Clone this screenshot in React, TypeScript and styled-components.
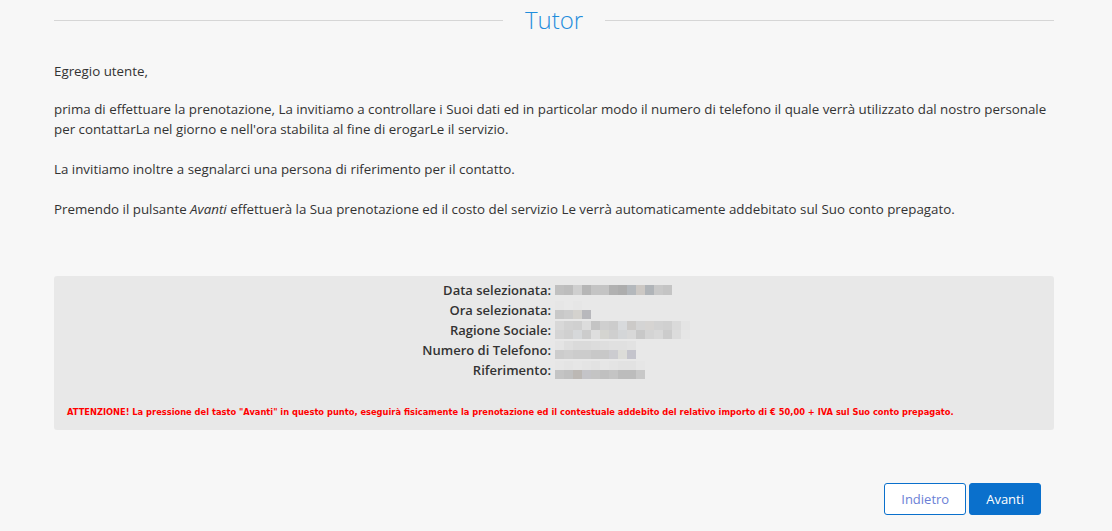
import React from "react";
import styled, { createGlobalStyle } from "styled-components";

const Global = createGlobalStyle`
  html, body {
    margin: 0;
    padding: 0;
    background: #f7f7f7;
  }
  body {
    font-family: "Open Sans", "Liberation Sans", sans-serif;
    color: #333;
  }
`;

// pixelated (blurred-out) values, one string of grey levels per row
type Cells = string[][];

const details: { label: string; cells: Cells }[] = [
  {
    label: "Data selezionata:",
    cells: [
      ["#c0c0c0", "#bdbdbd", "#cfcfcf", "#b6b6b6", "#c4c4c4", "#c4c4c4", "#b1b1b1", "#adadad", "#b4b8bc", "#ccc8c4", "#b0b4b8", "#c8c8c8", "#c4c4c4"],
    ],
  },
  {
    label: "Ora selezionata:",
    cells: [
      ["#e6e6e6", "#e8e8e8", "#e6e6e6", "#e8e8e8"],
      ["#c8c8c8", "#cccccc", "#d4d2ce", "#b8b8bc"],
    ],
  },
  {
    label: "Ragione Sociale:",
    cells: [
      ["#d8d8d8", "#d2d2d2", "#d0d0d0", "#dcdcdc", "#c4c4c4", "#cfcfcf", "#cccccc", "#d8dadc", "#cccac8", "#d4d4d4", "#d6d4d2", "#d2d2d2", "#d0d0d0", "#dadada", "#e4e4e4"],
      ["#d4d4d4", "#d0d0d0", "#d6d8da", "#cccccc", "#dedede", "#d4d4d0", "#cfcfcf", "#d4d6d8", "#d8d8d8", "#c8c8c8", "#d4d4d4", "#d8d8d8", "#cccccc", "#dcdcdc", "#e6e6e6"],
    ],
  },
  {
    label: "Numero di Telefono:",
    cells: [
      ["#e4e4e4", "#dedede", "#dadada", "#dadada", "#dcdcdc", "#dedede", "#e0e0e0", "#e0e0e0", "#e2e2e2"],
      ["#cccccc", "#cfcfcf", "#cccccc", "#cccccc", "#c8c8c8", "#c8c8c8", "#ccccd0", "#dcdcd8", "#c4c4cc"],
    ],
  },
  {
    label: "Riferimento:",
    cells: [
      ["#e6e6e6", "#e4e4e4", "#e6e6e6", "#e4e4e4", "#e2e2e2", "#e6e6e6", "#e4e4e4", "#e2e2e2", "#e2e2e2", "#e6e6e6"],
      ["#c4c4c4", "#c0c0c0", "#bcb8b4", "#c4c4c8", "#c4c4c4", "#c0c0c0", "#c4c4c4", "#bcbcbc", "#bcbcbc", "#c8c8c8"],
    ],
  },
];

const Blurred: React.FC<{ cells: Cells }> = ({ cells }) => (
  <S.Blur>
    {cells.map((row, i) => (
      <S.BlurRow key={i}>
        {row.map((c, j) => (
          <S.Cell key={j} $shade={c} $tall={cells.length === 1} />
        ))}
      </S.BlurRow>
    ))}
  </S.Blur>
);

export default function App() {
  return (
    <>
      <Global />
      <S.Page>
        <S.Heading>
          <S.Rule />
          <S.Title>Tutor</S.Title>
          <S.Rule />
        </S.Heading>

        <S.Text>
          <S.P $gap={18}>Egregio utente,</S.P>
          <S.P $gap={20}>
            prima di effettuare la prenotazione, La invitiamo a controllare i Suoi dati ed in
            particolar modo il numero di telefono il quale verrà utilizzato dal nostro personale
            per contattarLa nel giorno e nell'ora stabilita al fine di erogarLe il servizio.
          </S.P>
          <S.P $gap={20}>
            La invitiamo inoltre a segnalarci una persona di riferimento per il contatto.
          </S.P>
          <S.P $gap={20}>
            Premendo il pulsante <em>Avanti</em> effettuerà la Sua prenotazione ed il costo del
            servizio Le verrà automaticamente addebitato sul Suo conto prepagato.
          </S.P>
        </S.Text>

        <S.Summary>
          <S.Details>
            {details.map((d) => (
              <React.Fragment key={d.label}>
                <S.Label>{d.label}</S.Label>
                <S.Value>
                  <Blurred cells={d.cells} />
                </S.Value>
              </React.Fragment>
            ))}
          </S.Details>
          <S.Warning>
            ATTENZIONE! La pressione del tasto "Avanti" in questo punto, eseguirà fisicamente la
            prenotazione ed il contestuale addebito del relativo importo di € 50,00 + IVA sul Suo
            conto prepagato.
          </S.Warning>
        </S.Summary>

        <S.Actions>
          <S.Button $primary={false}>Indietro</S.Button>
          <S.Button $primary>Avanti</S.Button>
        </S.Actions>
      </S.Page>
    </>
  );
}

export class S {
  static Page = styled.div`
    width: 1000px;
    margin-left: 54px;
    padding-top: 6px;
  `;

  static Heading = styled.div`
    display: flex;
    align-items: center;
    gap: 22px;
    height: 28px;
  `;

  static Rule = styled.div`
    flex: 1;
    height: 1px;
    background: #d6d6d6;
  `;

  static Title = styled.h2`
    margin: 0;
    font-size: 24px;
    font-weight: 300;
    line-height: 28px;
    color: #1f8ddc;
  `;

  static Text = styled.div`
    margin-top: 27px;
    font-size: 13.33px;
    line-height: 20px;
    color: #333;
  `;

  static P = styled.p<{ $gap: number }>`
    margin: 0 0 ${(p) => p.$gap}px;
  `;

  static Summary = styled.div`
    margin-top: 57px;
    background: #e8e8e8;
    border-radius: 3px;
    padding: 4px 0 13px;
  `;

  static Details = styled.div`
    display: grid;
    grid-template-columns: 497px 1fr;
    column-gap: 4px;
    font-size: 13px;
    font-weight: 600;
    line-height: 20px;
    color: #333;
  `;

  static Label = styled.div`
    text-align: right;
  `;

  static Value = styled.div`
    display: flex;
    align-items: center;
  `;

  static Blur = styled.div`
    display: flex;
    flex-direction: column;
  `;

  static BlurRow = styled.div`
    display: flex;
  `;

  static Cell = styled.span<{ $shade: string; $tall: boolean }>`
    width: 9px;
    height: ${(p) => (p.$tall ? "10px" : "9px")};
    background: ${(p) => p.$shade};
  `;

  static Warning = styled.div`
    margin-top: 27px;
    padding-left: 13px;
    font-family: Verdana, "DejaVu Sans", sans-serif;
    font-size: 8.3px;
    font-weight: bold;
    color: #ff0000;
  `;

  static Actions = styled.div`
    display: flex;
    justify-content: flex-end;
    gap: 3px;
    margin-top: 53px;
    padding-right: 13px;
  `;

  static Button = styled.button<{ $primary: boolean }>`
    height: 32px;
    padding: 0 16px;
    border-radius: 3px;
    font-family: "Open Sans", "Liberation Sans", sans-serif;
    font-size: 13px;
    border: 1px solid #0a70cc;
    background: ${(p) => (p.$primary ? "#0a70cc" : "#fff")};
    color: ${(p) => (p.$primary ? "#fff" : "#6b7fd6")};
  `;
}
